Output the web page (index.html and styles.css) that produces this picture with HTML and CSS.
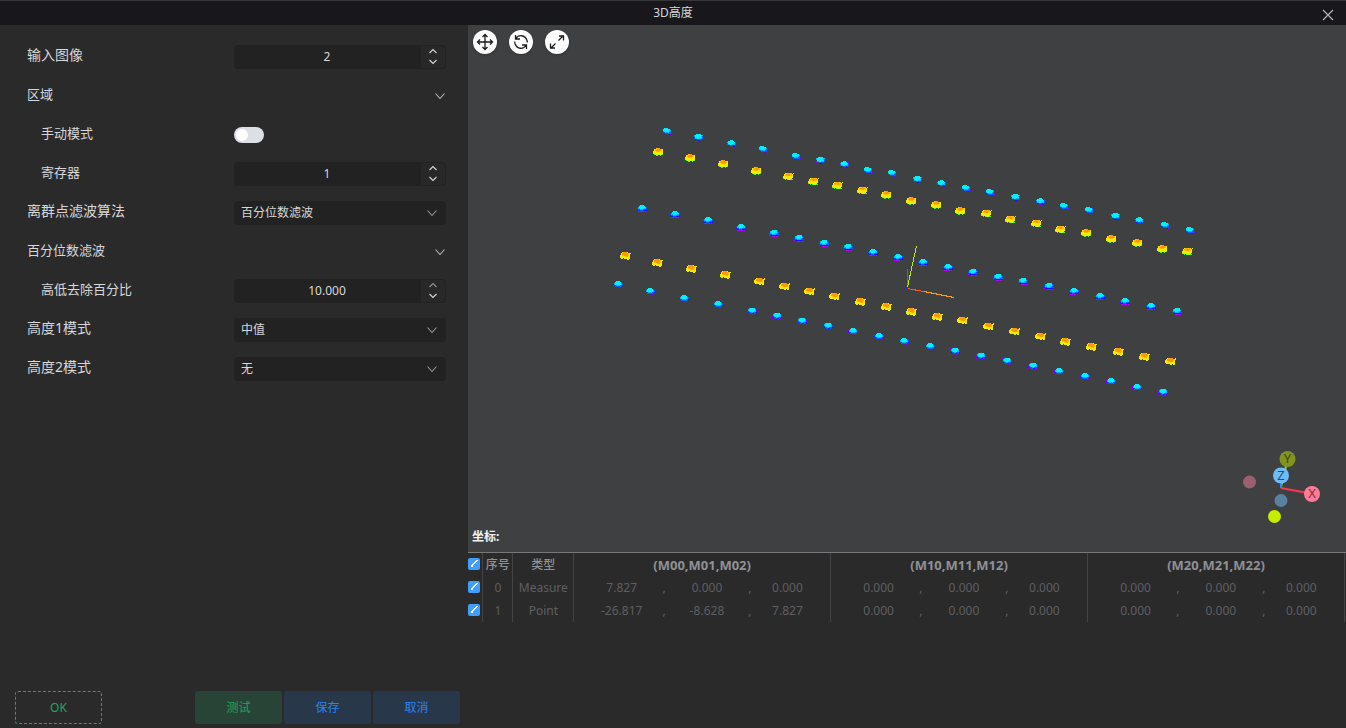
FILE: index.html
```html
<!DOCTYPE html>
<html lang="zh-CN">
<head>
<meta charset="utf-8">
<title>3D高度</title>
<link rel="stylesheet" href="styles.css">
</head>
<body>
<svg class="defs" aria-hidden="true">
  <symbol id="down" viewBox="0 0 12 12"><path d="M1.500 3.500 6 8.500l4.500-5" fill="none" stroke="currentColor" stroke-width="1.100"/></symbol>
  <symbol id="step-up" viewBox="0 0 10 6"><path d="M1.500 5 5 1.500 8.500 5" fill="none" stroke="currentColor" stroke-width="1.200"/></symbol>
  <symbol id="step-down" viewBox="0 0 10 6"><path d="M1.500 1 5 4.500 8.500 1" fill="none" stroke="currentColor" stroke-width="1.200"/></symbol>
</svg>
<div class="window">
  <header class="titlebar">
    <h1 class="title">3D高度</h1>
    <button class="close" type="button" aria-label="关闭"><svg width="12" height="12" viewBox="0 0 12 12"><path d="M1 1l10 10M11 1 1 11" stroke="#b4b4b8" stroke-width="1.200"/></svg></button>
  </header>
  <main class="main">
    <form class="panel">
      <div class="rows">
        <div class="row">
          <label class="label" for="input-image">输入图像</label>
          <div class="number"><input class="number-input" id="input-image" type="number" value="2"><span class="steps"><button class="step" type="button" aria-label="增加"><svg width="10" height="6"><use href="#step-up"/></svg></button><button class="step" type="button" aria-label="减少"><svg width="10" height="6"><use href="#step-down"/></svg></button></span></div>
        </div>
        <button class="row group" type="button"><span class="label label-small">区域</span><svg class="group-arrow" width="12" height="12"><use href="#down"/></svg></button>
        <div class="row">
          <label class="label label-small label-sub" for="manual">手动模式</label>
          <input class="switch" id="manual" type="checkbox" role="switch">
        </div>
        <div class="row">
          <label class="label label-small label-sub" for="register">寄存器</label>
          <div class="number"><input class="number-input" id="register" type="number" value="1"><span class="steps"><button class="step" type="button" aria-label="增加"><svg width="10" height="6"><use href="#step-up"/></svg></button><button class="step" type="button" aria-label="减少"><svg width="10" height="6"><use href="#step-down"/></svg></button></span></div>
        </div>
        <div class="row">
          <label class="label" for="outlier">离群点滤波算法</label>
          <div class="pick"><select class="select" id="outlier"><option>百分位数滤波</option></select><svg class="pick-arrow" width="12" height="12"><use href="#down"/></svg></div>
        </div>
        <button class="row group" type="button"><span class="label label-small">百分位数滤波</span><svg class="group-arrow" width="12" height="12"><use href="#down"/></svg></button>
        <div class="row">
          <label class="label label-small label-sub" for="percent">高低去除百分比</label>
          <div class="number"><input class="number-input" id="percent" type="text" inputmode="decimal" value="10.000"><span class="steps"><button class="step step-dim" type="button" aria-label="增加"><svg width="10" height="6"><use href="#step-up"/></svg></button><button class="step" type="button" aria-label="减少"><svg width="10" height="6"><use href="#step-down"/></svg></button></span></div>
        </div>
        <div class="row">
          <label class="label" for="height1">高度1模式</label>
          <div class="pick"><select class="select" id="height1"><option>中值</option></select><svg class="pick-arrow" width="12" height="12"><use href="#down"/></svg></div>
        </div>
        <div class="row">
          <label class="label" for="height2">高度2模式</label>
          <div class="pick"><select class="select" id="height2"><option>无</option></select><svg class="pick-arrow" width="12" height="12"><use href="#down"/></svg></div>
        </div>
      </div>
      <div class="actions">
        <button class="btn btn-ok" type="button">OK</button>
        <div class="actions-end">
          <button class="btn btn-test" type="button">测试</button>
          <button class="btn btn-blue" type="button">保存</button>
          <button class="btn btn-blue" type="button">取消</button>
        </div>
      </div>
    </form>
    <section class="work">
      <div class="viewer">
        <svg class="cloud" id="cloud" viewBox="468 25 878 527" shape-rendering="crispEdges" role="img" aria-label="点云">
          <g id="points"></g>
          <path d="M907.500 287v-18" stroke="#0a84e8"/>
          <path d="M907.500 287l9-41" stroke="#b6f000"/>
          <path d="M907 288.500l17 3" stroke="#ff5a10"/>
          <path d="M924 291.500l30 6" stroke="#ffa200"/>
          <path d="M906 288h2v1h-2z" fill="#2030ff"/>
        </svg>
        <div class="tools">
          <button class="tool" type="button" aria-label="平移"><svg width="24" height="24" viewBox="0 0 24 24" fill="none" stroke="#1c1c1c" stroke-width="1.300"><path d="M12 4.500v15M4.500 12h15M9.500 7 12 4.500 14.500 7M9.500 17l2.500 2.500 2.500-2.500M7 9.500 4.500 12 7 14.500M17 9.500l2.500 2.500-2.500 2.500"/></svg></button>
          <button class="tool" type="button" aria-label="旋转"><svg width="24" height="24" viewBox="0 0 24 24" fill="none" stroke="#1c1c1c" stroke-width="1.300"><path d="M6.500 5v4h4.500M7 8.500c2.500-4 9-4 11 2 .3 1 .3 1.500.3 2M17.500 19v-4H13M17 15.500c-2.500 4-9 4-11-2-.3-1-.3-1.500-.3-2"/></svg></button>
          <button class="tool" type="button" aria-label="缩放"><svg width="24" height="24" viewBox="0 0 24 24" fill="none" stroke="#1c1c1c" stroke-width="1.300"><path d="M13.500 10.500 18 6M14 6h4.500v4.500M10.500 13.500 6 18M5.500 13.500V18H10"/></svg></button>
        </div>
        <svg class="gizmo" width="110" height="90" viewBox="0 0 110 90" role="img" aria-label="坐标轴">
          <path d="M51 47 57 22" stroke="#8ee000" stroke-width="2"/>
          <circle cx="57.500" cy="19" r="8" fill="#82931f"/>
          <circle cx="19.500" cy="42" r="6.500" fill="#9b5f6e"/>
          <circle cx="51" cy="60.500" r="6.500" fill="#5b81a1"/>
          <circle cx="44.500" cy="76.500" r="6.500" fill="#c4ee00"/>
          <path d="M51 48V36" stroke="#2c8cff" stroke-width="2"/>
          <path d="M51 48l27 5" stroke="#ff3352" stroke-width="2"/>
          <circle cx="51" cy="35.500" r="8" fill="#6dbcfa"/>
          <circle cx="82" cy="54" r="8" fill="#ff7b96"/>
          <text class="axis axis-y" x="57.500" y="23">Y</text>
          <text class="axis axis-z" x="51" y="40">Z</text>
          <text class="axis axis-x" x="82" y="58">X</text>
        </svg>
        <div class="coords">坐标:</div>
      </div>
      <div class="results">
        <table class="table">
          <colgroup><col class="c-check"><col class="c-index"><col class="c-type"><col class="c-first"><col class="c-comma"><col class="c-value"><col class="c-comma"><col class="c-value"><col class="c-first"><col class="c-comma"><col class="c-value"><col class="c-comma"><col class="c-value"><col class="c-first"><col class="c-comma"><col class="c-value"><col class="c-comma"><col class="c-value"></colgroup>
          <thead>
            <tr><th class="edge tick"><input class="check" type="checkbox" checked aria-label="全选"></th><th class="edge">序号</th><th class="edge">类型</th><th class="edge matrix" colspan="5">(M00,M01,M02)</th><th class="edge matrix" colspan="5">(M10,M11,M12)</th><th class="edge matrix" colspan="5">(M20,M21,M22)</th></tr>
          </thead>
          <tbody>
            <tr><td class="edge tick"><input class="check" type="checkbox" checked aria-label="选择 0"></td><td class="edge">0</td><td class="edge">Measure</td><td class="first">7.827</td><td>,</td><td>0.000</td><td>,</td><td class="last edge">0.000</td><td class="first">0.000</td><td>,</td><td>0.000</td><td>,</td><td class="last edge">0.000</td><td class="first">0.000</td><td>,</td><td>0.000</td><td>,</td><td class="last edge">0.000</td></tr>
            <tr><td class="edge tick"><input class="check" type="checkbox" checked aria-label="选择 1"></td><td class="edge">1</td><td class="edge">Point</td><td class="first">-26.817</td><td>,</td><td>-8.628</td><td>,</td><td class="last edge">7.827</td><td class="first">0.000</td><td>,</td><td>0.000</td><td>,</td><td class="last edge">0.000</td><td class="first">0.000</td><td>,</td><td>0.000</td><td>,</td><td class="last edge">0.000</td></tr>
          </tbody>
        </table>
      </div>
    </section>
  </main>
</div>
<script src="cloud.js"></script>
</body>
</html>
```

FILE: styles.css
```css
* { box-sizing: border-box; }
body {
  margin: 0;
  background: #2a2a2a;
  color: #d6d8dc;
  font: 12px/18px "Noto Sans", "Noto Sans CJK SC", sans-serif;
}
button, input, select { font: inherit; color: inherit; margin: 0; padding: 0; border: 0; }
button { background: none; }
svg { display: block; }
.defs { position: absolute; width: 0; height: 0; }

.window { min-height: 100vh; display: flex; flex-direction: column; border-top: 1px solid #363638; }
.titlebar { height: 24px; position: relative; display: flex; align-items: center; justify-content: center; background: #18181c; }
.title { margin: 0; font-size: 12px; font-weight: 400; }
.close { position: absolute; right: 6px; top: 2px; width: 24px; height: 24px; display: grid; place-items: center; }
.main { flex: 1; display: flex; }

.panel { flex: none; width: 468px; display: flex; flex-direction: column; justify-content: space-between; background: #2a2a2a; }
.rows { padding: 12px 22px 0 27px; }
.row { width: 100%; height: 39px; display: grid; grid-template-columns: 207px 1fr; align-items: center; text-align: left; }
.label { font-size: 14px; padding-bottom: 3px; white-space: nowrap; }
.label-small { font-size: 13px; }
.label-sub { padding-left: 14px; }
.group-arrow { justify-self: end; color: #b9bbc0; }
.number, .pick { position: relative; height: 24px; border-radius: 4px; background: #222; }
.number { display: flex; padding: 1px; }
.number-input { flex: 1; min-width: 0; padding: 1px 2px 0 0; background: none; text-align: center; outline: 0; appearance: textfield; }
.number-input::-webkit-inner-spin-button { appearance: none; }
.steps { width: 24px; display: flex; flex-direction: column; background: #282828; border-radius: 0 3px 3px 0; }
.step { flex: 1; display: grid; place-items: center; color: #d0d2d6; }
.step-dim { color: #8c8e92; }
.select { width: 100%; height: 24px; padding-left: 7px; appearance: none; background: none; outline: 0; }
.pick-arrow { position: absolute; right: 8px; top: 6px; color: #96989c; pointer-events: none; }
.switch { appearance: none; width: 30px; height: 16px; padding: 2px; border-radius: 8px; background: #dcdfe6; }
.switch::before { content: ""; display: block; width: 12px; height: 12px; border-radius: 6px; background: #fff; }

.actions { display: flex; justify-content: space-between; padding: 0 8px 4px 15px; }
.actions-end { display: flex; gap: 2px; }
.btn { width: 87px; height: 33px; border-radius: 3px; }
.btn-ok { border: 1px dashed #22a55f; color: #22a55f; }
.btn-test { background: #284436; color: #22a55f; }
.btn-blue { background: #28384a; color: #2a84f4; }

.work { flex: 1; min-width: 0; display: flex; flex-direction: column; }
.viewer { flex: 1; position: relative; background: #3f4042; border-bottom: 1px solid #77787a; }
.cloud { position: absolute; left: 0; top: 0; width: 100%; height: 100%; }
.tools { position: relative; display: flex; gap: 12px; padding: 5px; }
.tool { width: 24px; height: 24px; border-radius: 50%; background: #fff; box-shadow: 0 1px 2px #2228; }
.gizmo { position: absolute; right: 6px; bottom: 22px; }
.axis { font: 13px "Noto Sans", sans-serif; text-anchor: middle; }
.axis-y { fill: #3c4a12; }
.axis-z { fill: #24506e; }
.axis-x { fill: #7e2c40; }
.coords { position: absolute; left: 4px; bottom: 6px; color: #f2f2f4; font-weight: 700; }

.results { min-height: 175px; padding-right: 1px; background: #2a2a2a; }
.table { width: 100%; table-layout: fixed; border-collapse: separate; border-spacing: 0; color: #5e5f63; }
.table th, .table td { height: 23px; padding: 0; text-align: center; font-weight: 400; white-space: nowrap; }
.table th { color: #8f9196; font-weight: 500; }
.table .matrix { font-size: 13px; font-weight: 700; }
.table .edge { border-right: 1px solid #444447; }
.table .tick { padding-bottom: 2px; }
.table .first { padding-left: 10px; }
.table .last { padding-right: 10px; }
.c-check { width: 15px; }
.c-index { width: 30px; }
.c-type { width: 60px; }
.c-first { width: 9.7%; }
.c-comma { width: 1.1%; }
.c-value { width: 8.7%; }
.check { appearance: none; display: block; width: 12px; height: 12px; border-radius: 2px; background: #409eff; }
.check:checked::before { content: ""; display: block; width: 8px; height: 12px; margin: 0 auto; background: linear-gradient(130deg, transparent 44%, #fff 44%, #fff 58%, transparent 58%) center / 8px 7px no-repeat; }
```

FILE: cloud.js
```js
const colors = {
  c: '#00f0ff', s: '#00b4ff', b: '#0060ff', n: '#2010ff', v: '#8800ff', m: '#c000ff',
  o: '#ff9800', a: '#ffb800', y: '#ffe800', l: '#c8ff00', g: '#40ff00'
};

const shapes = {
  blue: [
    ['..cccc....', '.cccccccb.', '.cccccccs.', '.scccccsb.', '..bssssbb.', '...bbbbbbv', '.......nv.'],
    ['....ccc...', '..cccccc.v', '.scccccccb', '.bccccccsb', '.bssccsssb', '..n.bbbnb.', '.....v.nn.'],
    ['...ccccc..', '.scccccccs', '.sccccccsb', '..cccccccb', '.bssccsssb', '.v..bbbbb.', '.....nn...']
  ],
  violet: [
    ['...cccc...', '..ccccccb.', '.scccccccb', 'bssccccssb', 'nbbsssbbbn', '.nnbbbnnnn', '.mmmvmm.m.'],
    ['...ccccc..', '.sccccccb.', '.sccccccsb', 'bsscccssbn', '.bbssssbbb', 'mnnnnnnnn.', '...mmmvmm.']
  ],
  low: [
    ['...cccc...', '..ccccccb.', 'vsccccccsb', 'nsccccccsb', 'v.bssssbbn', '..bbbbbbv.', '.......v..'],
    ['v.sccccc..', '.sccccccs.', '.sccccccsv', 'vbsccccssb', '.nbbssbbbn', 'v..bbnnbv.', '......v...']
  ],
  orange: [
    ['...aaoo....', '.yaaooooay.', '.yaoooooay.', 'yyyaaaayyy.', 'yyyyyyyyyy.', 'llyyyyyyyl.', '.gllyllllg.', '...gg..g...'],
    ['..yaaoaaa.l', '.yaooooaay.', '.yaaaooaay.', 'yyyyyyyyyy.', 'yyyyyyyyyy.', 'gllyyylll..', '..g.glllgg.']
  ],
  amber: [
    ['..yooooy...', '.yooooooayl', '.yooooooay.', 'yyaaoooaay.', 'lyyyyaaoyy.', 'lyyyyyyyyl.', '.ll.yyyyll.', '.......yy..'],
    ['..yaoooo..y', '.yaooooooyy', 'yyooooooay.', 'yyyaaoooay.', 'yyyyyyyyyy.', '.llyyyyyyl.', '.....ll.yl.']
  ]
};

const rows = [
  ['blue', '667,131 698,137 731,143 763,149 796,156 820,160 844,164 868,170 892,173 917,179 941,183 966,188 990,192 1015,197 1040,201 1064,206 1089,210 1115,216 1139,220 1165,225 1190,230'],
  ['orange', '658,151 690,157 723,163 756,170 788,176 813,181 837,185 862,190 886,194 911,200 936,204 960,210 986,213 1010,219 1036,223 1060,229 1086,232 1111,238 1137,242 1162,248 1187,251'],
  ['violet', '642,208 675,214 708,220 741,227 774,233 799,238 824,243 848,247 873,252 898,257 923,262 948,267 973,272 998,277 1023,281 1049,286 1074,291 1100,296 1125,301 1151,306 1177,311'],
  ['amber', '625,255 657,262 691,268 725,274 759,281 784,286 809,291 834,296 860,301 886,306 911,311 937,316 962,320 988,326 1014,331 1040,336 1065,341 1091,346 1118,351 1144,356 1170,361'],
  ['low', '618,284 650,291 684,298 718,304 752,311 777,316 802,321 828,326 853,331 879,336 904,341 930,346 955,351 981,356 1007,361 1033,366 1059,371 1085,376 1111,381 1137,387 1163,392']
];

let markup = '';
for (const [kind, list] of rows) {
  list.split(' ').forEach((pair, i) => {
    const [cx, cy] = pair.split(',').map(Number);
    const shape = shapes[kind][(i * 2 + (i >> 2)) % shapes[kind].length];
    shape.forEach((line, row) => {
      [...line].forEach((key, col) => {
        if (colors[key]) markup += `<rect x="${cx - 5 + col}" y="${cy - 3 + row}" width="1" height="1" fill="${colors[key]}"/>`;
      });
    });
  });
}
document.getElementById('points').innerHTML = markup;
```
